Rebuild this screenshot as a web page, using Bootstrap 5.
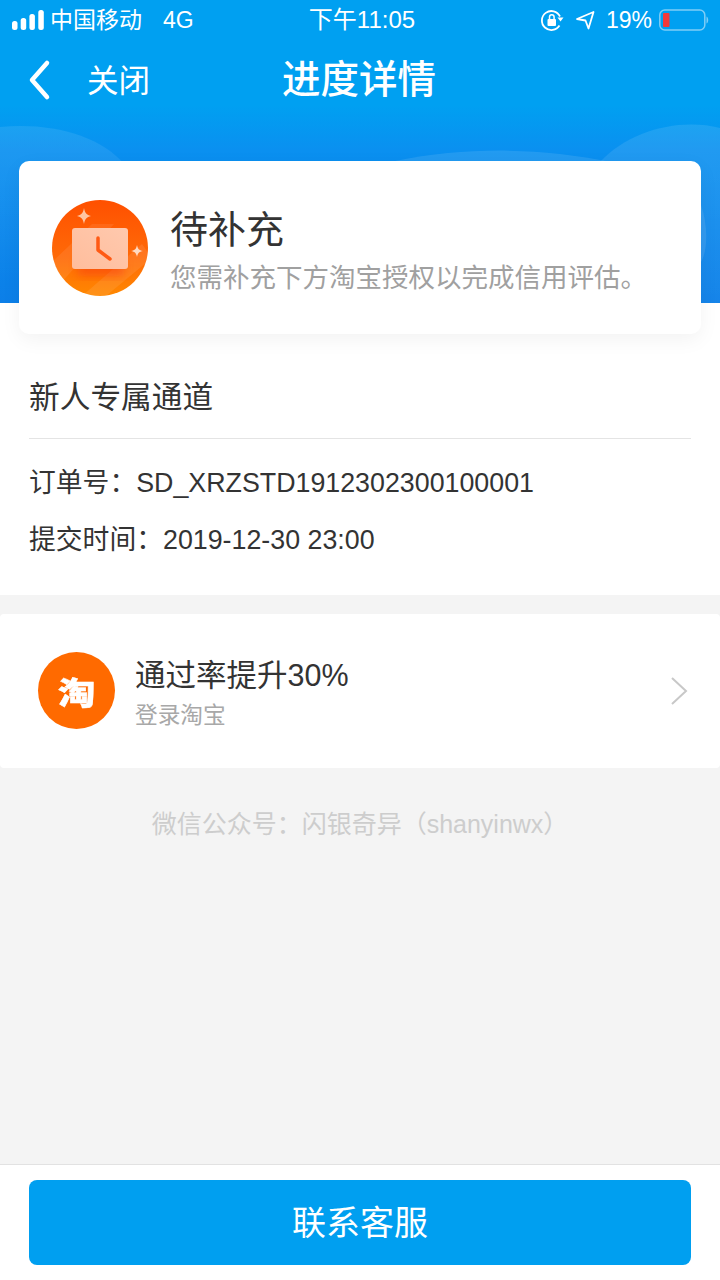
<!DOCTYPE html>
<html lang="zh-CN">
<head>
<meta charset="utf-8">
<title>进度详情</title>
<link href="https://cdn.jsdelivr.net/npm/bootstrap@5.3.0/dist/css/bootstrap.min.css" rel="stylesheet">
<style>
html,body{width:720px;height:1280px;margin:0;overflow:hidden}
body{font-family:"Liberation Sans","Noto Sans CJK SC",sans-serif;background:#f4f4f4;color:#333}
.pg{width:720px;height:1280px}
.hero{height:303px;position:relative;overflow:hidden;background:linear-gradient(180deg,#00a0f1 0,#00a0f1 105px,#0a90f0 150px,#0c7fe8 303px);color:#fff}
.hills{position:absolute;left:0;top:0}
.sbar{height:40px;padding:0 11px 0 12px;position:relative;font-size:23px}
.sl{width:262px}
.sr{width:259px}
.stime{font-size:24px}
.sig{width:32px;height:20px;margin-right:6px}
.g4{margin-left:21px}
.ilock{margin-right:11px}
.iarrow{margin-right:11px}
.pct{margin-right:6px;font-size:23px}
.nbar{height:78px;position:relative}
.nback{position:absolute;left:28px;top:19px}
.nclose{position:absolute;left:87px;top:18px;font-size:31.5px;line-height:46px}
.ntitle{font-size:38.5px;line-height:50px;font-weight:500;margin:1px 2px 0 0}
.stcard{margin:-142px 19px 0;height:173px;background:#fff;border-radius:10px;position:relative;padding:0 33px;box-shadow:0 6px 20px rgba(0,0,0,.05)}
.sticon{margin-right:22px}
.sttitle{font-size:38px;line-height:50px;color:#333;margin-top:5px}
.stsub{font-size:26.5px;line-height:36px;color:#a0a0a0;white-space:nowrap;margin-top:5px}
.ordbox{margin-top:-31px;height:292px;padding:31px 29px 0;background:#fff}
.ordtitle{font-size:30.7px;line-height:42px;padding-top:43px;padding-bottom:19px;border-bottom:1px solid #e4e4e4;color:#333;box-sizing:content-box;height:42px}
.ordline{font-size:26.8px;line-height:36px;color:#333;white-space:nowrap}
.ol1{margin-top:26px}
.ol2{margin-top:21px}
.tbrow{height:154px;margin-top:19px;background:#fff;padding:0 31px 0 38px;border-radius:4px}
.tbicon{width:77px;height:77px;border-radius:50%;background:#ff6a00;color:#fff;margin:0 20px 1px 0;font-family:"Noto Sans CJK SC",sans-serif}
.tbglyph{font-size:31px;font-weight:900;line-height:1;transform:scale(1.2,1);-webkit-text-stroke:.5px #fff}
.tbtext{padding-top:2px}
.tbtitle{font-size:30.5px;line-height:42px;color:#333}
.tbsub{font-size:22.7px;line-height:32px;color:#a8a8a8;margin-top:3px}
.wm{font-size:25px;line-height:36px;color:#cdcdcd;text-align:center;padding-top:38px;height:396px}
.botbar{height:116px;background:#fff;border-top:1px solid #e2e2e2;padding:15px 29px 0}
.kfbtn{width:100%;height:85px;background:#009ff0;border:0;border-radius:8px;color:#fff;font-size:34px;font-weight:400;padding-top:8px}
</style>
</head>
<body>
<div class="pg d-flex flex-column">
  <div class="hero">
    <svg class="hills" width="720" height="303" viewBox="0 0 720 303">
      <defs>
        <linearGradient id="hf" x1="0" y1="0" x2="0" y2="1"><stop offset="0" stop-color="#fff" stop-opacity=".09"/><stop offset=".35" stop-color="#fff" stop-opacity=".06"/><stop offset="1" stop-color="#fff" stop-opacity="0"/></linearGradient>
        <linearGradient id="hf2" x1="0" y1="0" x2="0" y2="1"><stop offset="0" stop-color="#fff" stop-opacity=".1"/><stop offset=".4" stop-color="#fff" stop-opacity=".08"/><stop offset="1" stop-color="#fff" stop-opacity=".04"/></linearGradient>
      </defs>
      <path d="M0 127 C50 122 100 135 125 165 L125 280 L0 280Z" fill="url(#hf)"/>
      <path d="M395 161 C470 146 540 148 612 162 L612 200 L395 200Z" fill="#fff" opacity=".1"/>
      <path d="M600 162 C630 130 680 118 720 128 L720 303 L600 303Z" fill="url(#hf2)"/>
      <path d="M701 205 C708 225 708 250 701 262Z" fill="#fff" opacity=".1"/>
    </svg>
    <div class="sbar d-flex align-items-center justify-content-between">
      <div class="sl d-flex align-items-center">
        <svg class="sig" viewBox="0 0 32 20"><g fill="#fff"><rect x="0" y="11" width="5.500" height="9" rx="2.500"/><rect x="8.700" y="8" width="5.500" height="12" rx="2.500"/><rect x="17.400" y="4" width="5.500" height="16" rx="2.500"/><rect x="26.300" y="0" width="5.500" height="20" rx="2.500"/></g></svg>
        <span>中国移动</span><span class="g4">4G</span>
      </div>
      <div class="stime">下午11:05</div>
      <div class="sr d-flex align-items-center justify-content-end">
        <svg class="ilock" width="24" height="24" viewBox="0 0 24 24" fill="none" stroke="#fff" stroke-width="1.800"><path d="M19.500 17.500A9.500 9.500 0 1 1 20 8.500"/><path d="M17.500 9.500h6l-3 4Z" fill="#fff" stroke="none"/><rect x="7.500" y="11" width="8.500" height="7" rx="1" fill="#fff" stroke="none"/><path d="M9.500 11.500V9a2.300 2.300 0 0 1 4.600 0v2.500" stroke-width="1.500"/></svg>
        <svg class="iarrow" width="20" height="20" viewBox="0 0 20 20" fill="none" stroke="#fff" stroke-width="1.800" stroke-linejoin="round"><path d="M2 9L18.500 2 13.500 18.500 10.500 10.500Z"/></svg>
        <span class="pct">19%</span>
        <svg width="51" height="22" viewBox="0 0 51 22"><rect x="1.800" y="1" width="45" height="20" rx="5" fill="none" stroke="#7fcdf6" stroke-width="1.500"/><rect x="5" y="4" width="6.500" height="14" rx="1" fill="#f4393a"/><path d="M48.500 7.500c2 .5 2.500 6 0 7Z" fill="#7fcdf6"/></svg>
      </div>
    </div>
    <div class="nbar d-flex justify-content-center align-items-center">
      <svg class="nback" width="24" height="42" viewBox="0 0 24 42" fill="none" stroke="#fff" stroke-width="4.500" stroke-linecap="round" stroke-linejoin="round"><path d="M19 4L4 21l15 17"/></svg>
      <span class="nclose">关闭</span>
      <span class="ntitle">进度详情</span>
    </div>
  </div>

  <div class="stcard d-flex align-items-center">
    <svg class="flex-shrink-0 sticon" width="96" height="96" viewBox="0 0 96 96">
      <defs>
        <linearGradient id="g1" x1="0" y1="0" x2="0" y2="1"><stop offset="0" stop-color="#ff5000"/><stop offset=".6" stop-color="#ff6a08"/><stop offset="1" stop-color="#ff8800"/></linearGradient>
        <linearGradient id="g2" x1="0" y1="1" x2="1" y2="0"><stop offset="0" stop-color="#ffbd9c"/><stop offset="1" stop-color="#ffc9ae"/></linearGradient>
        <filter id="bl" x="-30%" y="-30%" width="160%" height="160%"><feGaussianBlur stdDeviation="5"/></filter>
        <clipPath id="cc"><circle cx="48" cy="48" r="48"/></clipPath>
      </defs>
      <circle cx="48" cy="48" r="48" fill="url(#g1)"/>
      <g clip-path="url(#cc)">
        <path d="M0 62L40 24h22L8 84Z" fill="#fff" opacity=".08"/>
        <path d="M30 96L90 44l10 14-46 38Z" fill="#fff" opacity=".09"/>
        <rect x="26" y="60" width="46" height="16" fill="#f8400a" opacity=".55" filter="url(#bl)"/>
      </g>
      <rect x="20" y="28" width="56" height="41" rx="3" fill="url(#g2)"/>
      <path d="M46 38v12l12 9" fill="none" stroke="#ff5a14" stroke-width="3.500" stroke-linecap="round" stroke-linejoin="round"/>
      <path d="M32 8c1 5 2.500 6.800 7 8-4.500 1.200-6 3-7 8-1-5-2.500-6.800-7-8 4.500-1.200 6-3 7-8Z" fill="#ffc5a3"/>
      <path d="M85 45c.8 4 2 5.200 6 6-4 .8-5.200 2-6 6-.8-4-2-5.200-6-6 4-.8 5.200-2 6-6Z" fill="#ffd9c2"/>
    </svg>
    <div>
      <div class="sttitle">待补充</div>
      <div class="stsub">您需补充下方淘宝授权以完成信用评估。</div>
    </div>
  </div>

  <div class="ordbox">
    <div class="ordtitle">新人专属通道</div>
    <div class="ordline ol1">订单号：SD_XRZSTD1912302300100001</div>
    <div class="ordline ol2">提交时间：2019-12-30 23:00</div>
  </div>

  <div class="tbrow d-flex align-items-center">
    <div class="tbicon flex-shrink-0 d-flex align-items-center justify-content-center"><span class="tbglyph">淘</span></div>
    <div class="flex-grow-1 tbtext">
      <div class="tbtitle">通过率提升30%</div>
      <div class="tbsub">登录淘宝</div>
    </div>
    <svg width="20" height="30" viewBox="0 0 20 30" fill="none" stroke="#c8c8c8" stroke-width="2"><path d="M3 2l14 13L3 28"/></svg>
  </div>

  <div class="wm">微信公众号：闪银奇异（shanyinwx）</div>

  <div class="botbar"><button class="btn kfbtn" type="button">联系客服</button></div>
</div>
<script src="https://cdn.jsdelivr.net/npm/bootstrap@5.3.0/dist/js/bootstrap.bundle.min.js"></script>
</body>
</html>
